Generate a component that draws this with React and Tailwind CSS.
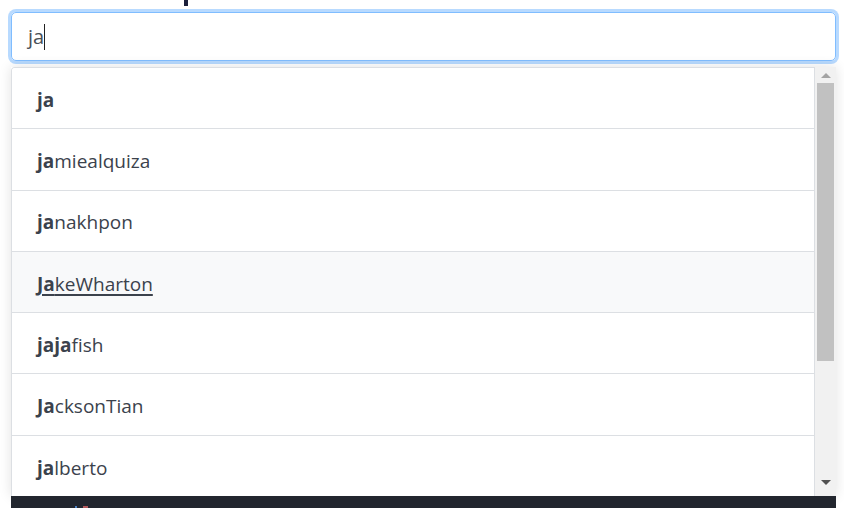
const query = 'ja'

const USERS = ['ja', 'jamiealquiza', 'janakhpon', 'JakeWharton', 'jajafish', 'JacksonTian', 'jalberto']

function Highlight({ text }) {
  // bold every case-insensitive occurrence of the query
  const parts = []
  const lower = text.toLowerCase()
  let i = 0
  while (i < text.length) {
    const at = lower.indexOf(query, i)
    if (at === -1) {
      parts.push(<span key={i}>{text.slice(i)}</span>)
      break
    }
    if (at > i) parts.push(<span key={i}>{text.slice(i, at)}</span>)
    parts.push(<strong key={'b' + at} className="font-bold">{text.slice(at, at + query.length)}</strong>)
    i = at + query.length
  }
  return parts
}

export default function App() {
  return (
    <div className="w-[844px] h-[508px] overflow-hidden bg-white" style={{ fontFamily: '"Open Sans", "Noto Sans", sans-serif' }}>
      <div className="h-[12px] pl-[184px]">
        <div className="w-[4px] h-[6px] bg-[#1b1f3b]" />
      </div>

      <div className="ml-[11px] w-[825px]">
        <div className="h-[49px] flex items-center px-4 border border-[#80bdff] rounded-[5px] shadow-[0_0_0_3px_rgba(0,123,255,0.28)] text-[20px] text-[#495057]">
          <span>ja</span>
          <span className="w-px h-[26px] bg-[#222]" />
        </div>

        <div className="mt-[6px] h-[429px] flex shadow-[0_0_12px_rgba(0,0,0,0.12)]">
          <div className="flex-1 border border-b-0 border-[#dcdfe3] rounded-tl-[4px] overflow-hidden">
            {USERS.map((u) => {
              const active = u === 'JakeWharton'
              return (
                <div
                  key={u}
                  className={
                    'h-[61.3px] flex items-center pl-[25px] pt-[4px] text-[19px] text-[#3b424c] border-b border-[#dcdfe3] ' +
                    (active ? 'bg-[#f8f9fa] underline decoration-[1.5px] underline-offset-[3px]' : 'bg-white')
                  }
                >
                  <Highlight text={u} />
                </div>
              )
            })}
          </div>

          <div className="w-[21px] bg-[#f1f1f1] flex flex-col items-center">
            <div className="h-[16px] flex items-center justify-center">
              <div className="w-0 h-0 border-x-[5px] border-x-transparent border-b-[5px] border-b-[#a3a3a3]" />
            </div>
            <div className="w-[17px] h-[278px] bg-[#c1c1c1]" />
            <div className="flex-1" />
            <div className="h-[18px] flex items-start justify-center pt-[2px]">
              <div className="w-0 h-0 border-x-[5px] border-x-transparent border-t-[5px] border-t-[#505050]" />
            </div>
          </div>
        </div>

        <div className="h-[12px] bg-[#22262e] flex items-end pl-[64px] gap-[6px]">
          <div className="w-[2px] h-[2px] bg-[#4a7fc1]" />
          <div className="w-[5px] h-[2px] bg-[#b0595c]" />
        </div>
      </div>
    </div>
  )
}
